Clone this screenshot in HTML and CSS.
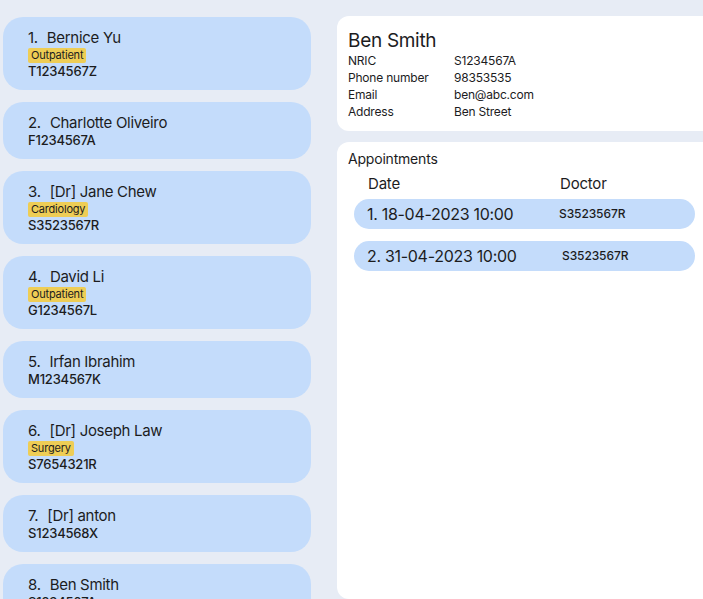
FILE: index.html
```html
<!DOCTYPE html>
<html>
<head>
<meta charset="utf-8">
<link rel="stylesheet" href="styles.css">
</head>
<body>
<div class="app">
  <div class="list">
    <div class="card">
      <div class="name"><span class="idx">1.</span>Bernice Yu</div>
      <div class="tags"><span class="tag">Outpatient</span></div>
      <div class="nric">T1234567Z</div>
    </div>
    <div class="card">
      <div class="name"><span class="idx">2.</span>Charlotte Oliveiro</div>
      <div class="nric">F1234567A</div>
    </div>
    <div class="card">
      <div class="name"><span class="idx">3.</span>[Dr] Jane Chew</div>
      <div class="tags"><span class="tag">Cardiology</span></div>
      <div class="nric">S3523567R</div>
    </div>
    <div class="card">
      <div class="name"><span class="idx">4.</span>David Li</div>
      <div class="tags"><span class="tag">Outpatient</span></div>
      <div class="nric">G1234567L</div>
    </div>
    <div class="card">
      <div class="name"><span class="idx">5.</span>Irfan Ibrahim</div>
      <div class="nric">M1234567K</div>
    </div>
    <div class="card">
      <div class="name"><span class="idx">6.</span>[Dr] Joseph Law</div>
      <div class="tags"><span class="tag">Surgery</span></div>
      <div class="nric">S7654321R</div>
    </div>
    <div class="card">
      <div class="name"><span class="idx">7.</span>[Dr] anton</div>
      <div class="nric">S1234568X</div>
    </div>
    <div class="card">
      <div class="name"><span class="idx">8.</span>Ben Smith</div>
      <div class="nric">S1234567A</div>
    </div>
  </div>
  <div class="side">
    <div class="panel detail">
      <div class="title">Ben Smith</div>
      <div class="fields">
        <div class="label">NRIC</div><div class="value">S1234567A</div>
        <div class="label">Phone number</div><div class="value">98353535</div>
        <div class="label">Email</div><div class="value">ben@abc.com</div>
        <div class="label">Address</div><div class="value">Ben Street</div>
      </div>
    </div>
    <div class="panel appts">
      <div class="appts-title">Appointments</div>
      <div class="appts-head">
        <div class="col-date">Date</div>
        <div class="col-doc">Doctor</div>
      </div>
      <div class="appt-list">
        <div class="appt">
          <div class="appt-date">1. 18-04-2023 10:00</div>
          <div class="appt-doc">S3523567R</div>
        </div>
        <div class="appt">
          <div class="appt-date">2. 31-04-2023 10:00</div>
          <div class="appt-doc appt-doc-2">S3523567R</div>
        </div>
      </div>
    </div>
  </div>
</div>
</body>
</html>
```
FILE: styles.css
```css
html, body {
  margin: 0;
  padding: 0;
  background: #e7ecf5;
  font-family: "Inter", "Liberation Sans", sans-serif;
  color: #1c1c1e;
  overflow: hidden;
}

.app {
  display: flex;
  height: 599px;
  overflow: hidden;
}

.list {
  width: 308px;
  padding: 17px 0 0 3px;
  display: flex;
  flex-direction: column;
  gap: 12px;
  flex-shrink: 0;
}

.card {
  background: #c4dcfb;
  border-radius: 20px;
  padding: 12px 25px 11px 25px;
  display: flex;
  flex-direction: column;
}

.name {
  font-size: 15px;
  line-height: 18px;
  letter-spacing: -0.3px;
  white-space: nowrap;
}

.idx {
  margin-right: 9px;
}

.tags {
  display: flex;
  margin-top: 1px;
}

.tag {
  background: #eecd55;
  border-radius: 2px;
  font-size: 11px;
  line-height: 15px;
  padding: 0 3px;
  letter-spacing: -0.2px;
}

.nric {
  font-size: 13px;
  line-height: 16px;
  font-weight: 500;
  letter-spacing: -0.2px;
}

.side {
  margin-left: 26px;
  padding-top: 16px;
  display: flex;
  flex-direction: column;
  gap: 11px;
  flex: 1;
}

.panel {
  background: #ffffff;
  border-radius: 12px 0 0 12px;
}

.detail {
  padding: 13px 11px 11px 11px;
}

.title {
  font-size: 19px;
  line-height: 23px;
  letter-spacing: -0.3px;
}

.fields {
  display: grid;
  grid-template-columns: 106px 1fr;
  font-size: 12px;
  line-height: 17px;
  letter-spacing: -0.2px;
}

.appts {
  flex: 1;
  padding: 8px 8px 0 11px;
}

.appts-title {
  font-size: 14px;
  line-height: 17px;
  letter-spacing: -0.2px;
}

.appts-head {
  display: flex;
  font-size: 15px;
  line-height: 18px;
  padding: 8px 0 0 20px;
  letter-spacing: -0.2px;
}

.col-date {
  width: 192px;
}

.appt-list {
  display: flex;
  flex-direction: column;
  gap: 12px;
  margin: 6px 0 0 6px;
}

.appt {
  background: #c4dcfb;
  border-radius: 15px;
  height: 30px;
  display: flex;
  align-items: center;
  padding-left: 13px;
}

.appt-date {
  width: 192px;
  font-size: 16px;
  letter-spacing: -0.3px;
}

.appt-doc {
  font-size: 12px;
  font-weight: 500;
  letter-spacing: -0.1px;
  margin-top: -2px;
}

.appt-doc-2 {
  margin-left: 3px;
}
```
